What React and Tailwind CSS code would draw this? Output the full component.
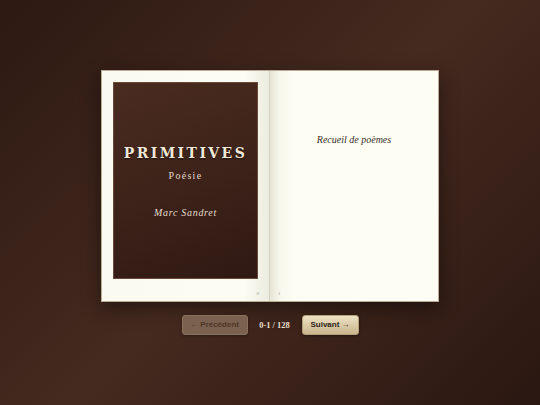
export default function App() {
  return (
    <div className="h-screen w-full flex flex-col items-center justify-center gap-[13px] bg-[linear-gradient(135deg,#2c1912_0%,#452a1f_50%,#2a1711_100%)]">
      <div className="flex w-[338px] h-[232px] shadow-[0_6px_18px_rgba(0,0,0,0.45)] border border-[#b9ab95]">
        <LeftPage />
        <RightPage />
      </div>
      <Controls />
    </div>
  );
}

function LeftPage() {
  return (
    <div className="relative w-1/2 h-full bg-[linear-gradient(to_right,#fbfaf0_0%,#fcfcf2_85%,#ecebdf_100%)] p-[11px] border-r border-[#d8d4c4]">
      <div className="w-full h-[197px] border border-[#6b4a3a] bg-[linear-gradient(160deg,#4a2b20_0%,#3c2219_55%,#2f1912_100%)] flex flex-col items-center">
        <div className="mt-[60px] text-[14px] leading-[20px] font-bold tracking-[2.4px] text-[#f1e8d8] font-['DejaVu_Serif',serif] [text-shadow:0_1px_2px_rgba(0,0,0,0.6)]">
          PRIMITIVES
        </div>
        <div className="mt-[7px] text-[10px] leading-[12px] tracking-[1.3px] text-[#e2d6c5] font-['Liberation_Serif',serif]">Poésie</div>
        <div className="mt-[25px] text-[10px] leading-[12px] italic tracking-[0.7px] text-[#e6dccd] font-['Liberation_Serif',serif]">Marc Sandret</div>
      </div>
      <span className="absolute right-[10px] bottom-[4px] text-[5px] text-[#a59c8c] font-['Liberation_Serif',serif]">0</span>
    </div>
  );
}

function RightPage() {
  return (
    <div className="relative w-1/2 h-full bg-[linear-gradient(to_right,#e6e4d6_0%,#f7f7ec_6%,#fdfdf3_14%,#fdfdf3_100%)] flex flex-col items-center">
      <div className="mt-[62px] text-[10px] leading-[14px] italic text-[#3b302a] font-['Liberation_Serif',serif]">
        Recueil de poèmes
      </div>
      <span className="absolute left-[8px] bottom-[4px] text-[5px] text-[#a59c8c] font-['Liberation_Serif',serif]">1</span>
    </div>
  );
}

function Controls() {
  return (
    <div className="flex items-center">
      <button className="w-[66px] h-[20px] rounded-[3px] bg-[#7a6150] border border-[#8a705e] text-[8px] font-bold text-[#4e3727] font-['Liberation_Sans',sans-serif] shadow-[0_1px_3px_rgba(0,0,0,0.35)]">
        ← Précédent
      </button>
      <span className="w-[54px] text-center text-[8.5px] font-bold text-[#eadfcd] font-['Liberation_Serif',serif]">0-1 / 128</span>
      <button className="w-[57px] h-[20px] rounded-[3px] bg-[linear-gradient(to_bottom,#ede2c4,#c9b58d)] border border-[#b5a07a] text-[8px] font-bold text-[#2b1d14] font-['Liberation_Sans',sans-serif] shadow-[0_1px_3px_rgba(0,0,0,0.4)]">
        Suivant →
      </button>
    </div>
  );
}
